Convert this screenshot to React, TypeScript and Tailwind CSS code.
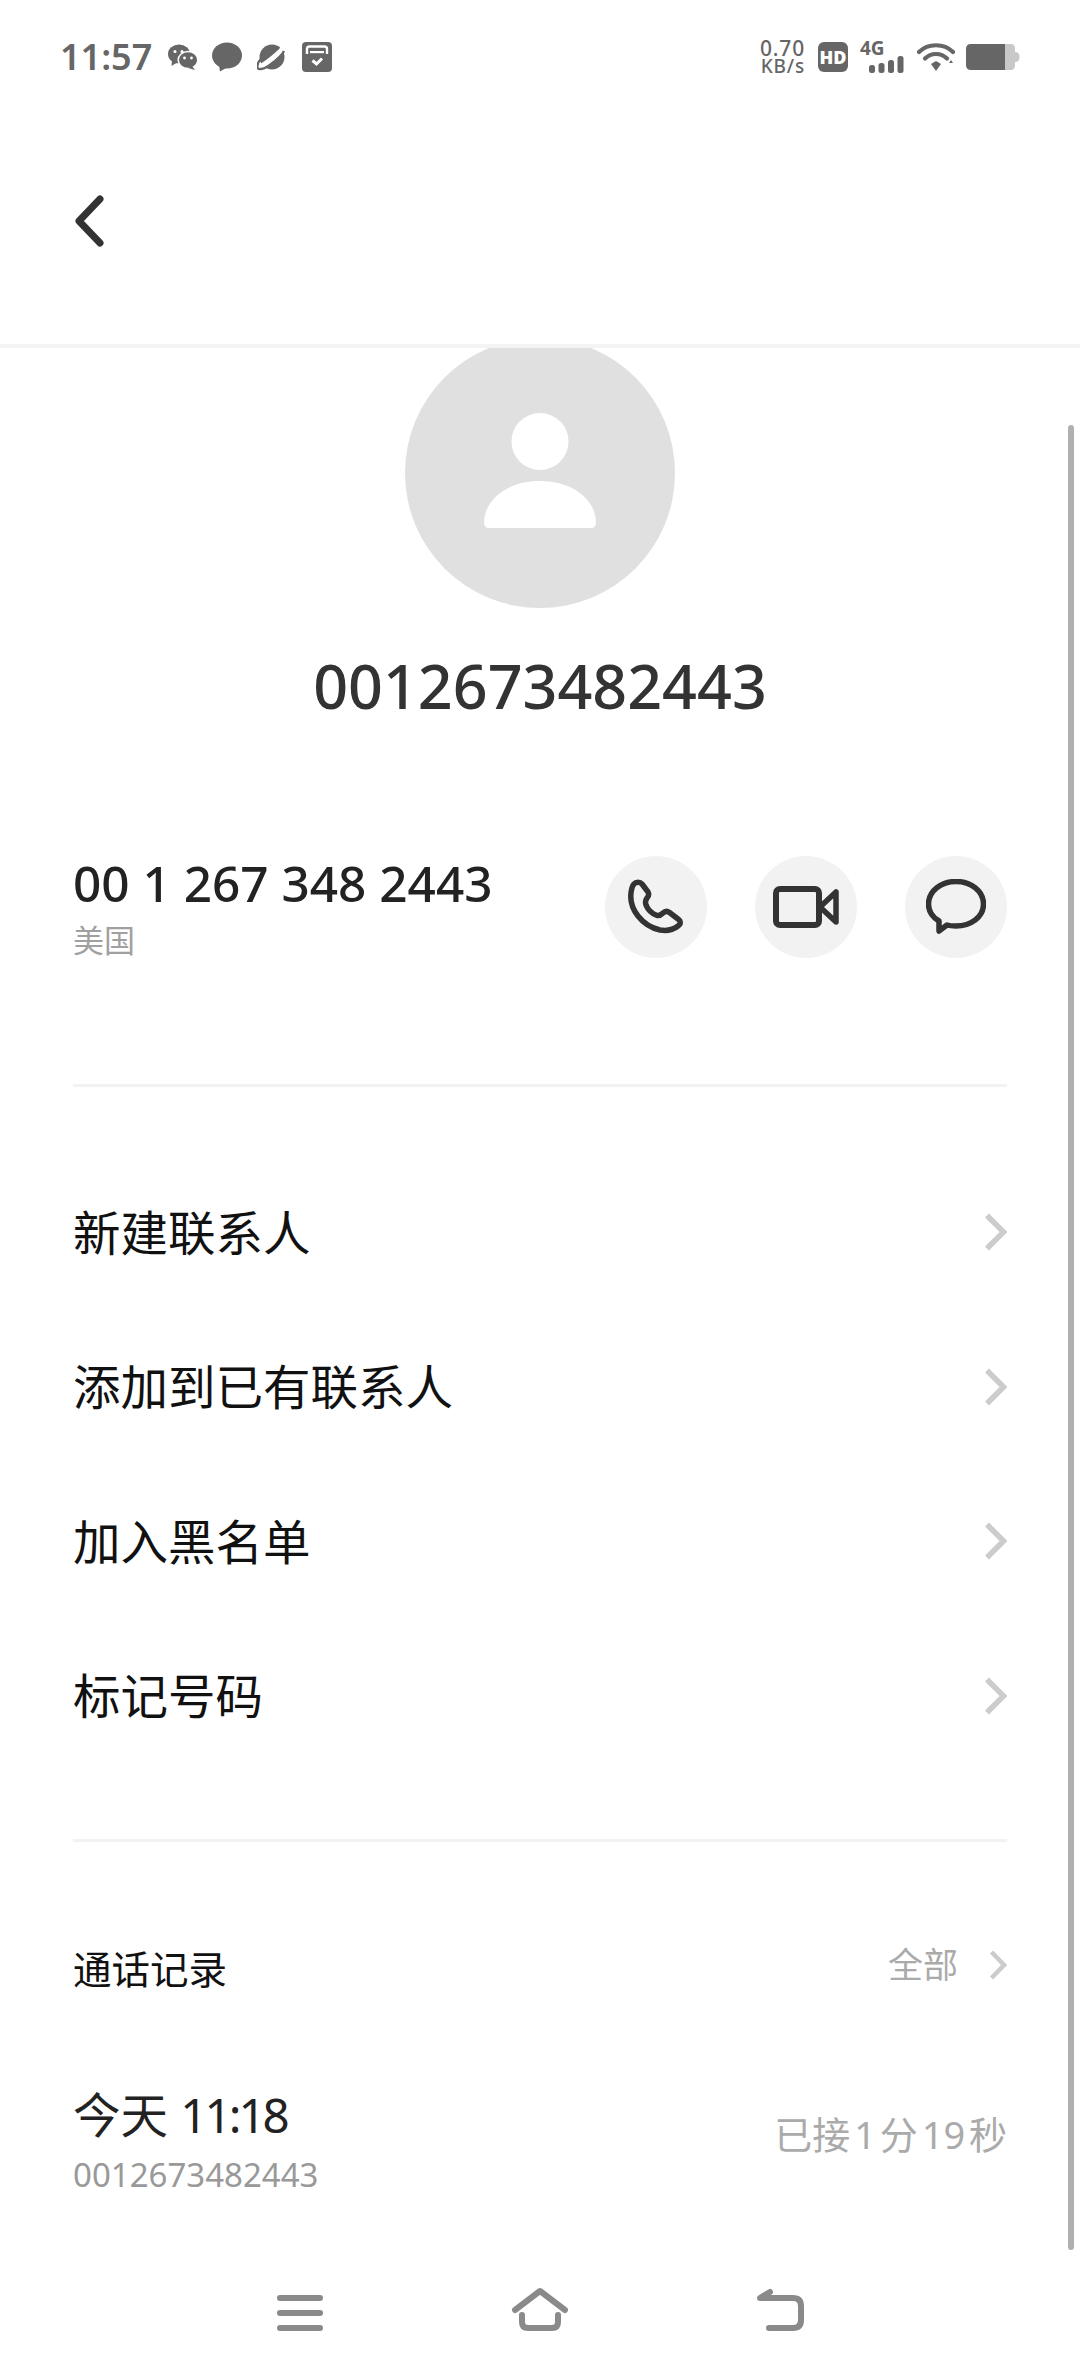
import React from "react";

const font = { fontFamily: '"Noto Sans", "Noto Sans CJK SC", sans-serif' };

function Chevron() {
  return (
    <svg width="23" height="38" viewBox="0 0 23 38" fill="none">
      <path d="M3 2.5 L19.5 19 L3 35.5" stroke="#cccccc" strokeWidth="5.5" strokeLinejoin="miter" />
    </svg>
  );
}

function SmallChevron() {
  return (
    <svg width="18" height="30" viewBox="0 0 18 30" fill="none">
      <path d="M2.5 2 L15 15 L2.5 28" stroke="#cccccc" strokeWidth="4.5" strokeLinejoin="miter" />
    </svg>
  );
}

function StatusLeft() {
  return (
    <div className="flex items-center">
      <span className="w-[168px] pl-[60px] text-[36px] leading-none font-semibold text-[#666]">11:57</span>
      <svg width="30" height="26" viewBox="0 0 30 26">
        <ellipse cx="11" cy="10" rx="11" ry="9.5" fill="#666" />
        <path d="M4 16 L3.5 22 L10 18Z" fill="#666" />
        <ellipse cx="20" cy="16" rx="9.8" ry="8.5" fill="#666" stroke="#fff" strokeWidth="1.5" />
        <path d="M24 22 L27 26 L20 24Z" fill="#666" />
        <circle cx="7" cy="7.5" r="1.5" fill="#fff" />
        <circle cx="14" cy="7.5" r="1.5" fill="#fff" />
        <circle cx="16.5" cy="14" r="1.4" fill="#fff" />
        <circle cx="23.5" cy="14" r="1.4" fill="#fff" />
      </svg>
      <svg width="30" height="30" viewBox="0 0 30 30" className="ml-[14px]">
        <ellipse cx="15" cy="13.5" rx="15" ry="13" fill="#666" />
        <path d="M7 23 L8 29.5 L16 25Z" fill="#666" />
      </svg>
      <svg width="30" height="28" viewBox="0 0 30 28" className="ml-[15px]">
        <circle cx="15" cy="14" r="12.5" fill="#666" />
        <path d="M1 24 C6 24 24 9 28 3" fill="none" stroke="#fff" strokeWidth="5" />
        <path d="M4 16 C-1 21 -1 27 4 26 C12 25 24 14 27 8" fill="none" stroke="#666" strokeWidth="2.4" />
      </svg>
      <svg width="30" height="30" viewBox="0 0 30 30" className="ml-[15px]">
        <rect width="30" height="30" rx="4" fill="#666" />
        <path d="M5 12 V7 Q5 4.5 7.5 4.5 H22.5 Q25 4.5 25 7 V12" fill="none" stroke="#fff" strokeWidth="2.4" />
        <rect x="8" y="9" width="14" height="2.2" fill="#fff" />
        <path d="M10.5 18.5 L14.5 22 L20 16.5" fill="none" stroke="#fff" strokeWidth="3" />
      </svg>
    </div>
  );
}

function StatusRight() {
  return (
    <div className="flex items-center">
      <div className="flex w-[47px] flex-col items-end gap-[1px] whitespace-nowrap text-[#666] font-medium">
        <span className="h-[17px] text-[21px] leading-[17px] tracking-[0.8px]">0.70</span>
        <span className="h-[17px] text-[19px] leading-[17px] tracking-[0.8px]">KB/s</span>
      </div>
      <div className="ml-[13px] flex h-[30px] w-[30px] items-center justify-center rounded-[6px] bg-[#666] text-[18px] leading-none font-black text-white">
        HD
      </div>
      <div className="relative ml-[12px] h-[30px] w-[44px]">
        <span className="absolute left-0 top-[-4px] text-[19px] leading-[20px] font-bold text-[#666]">4G</span>
        <svg width="35" height="17" viewBox="0 0 35 17" className="absolute bottom-[-1px] right-0">
          <rect x="0" y="9" width="6" height="8" rx="2.5" fill="#666" />
          <rect x="9.5" y="7" width="6" height="10" rx="2.5" fill="#666" />
          <rect x="19" y="4" width="6" height="13" rx="2.5" fill="#666" />
          <rect x="28.5" y="0" width="6" height="17" rx="2.5" fill="#666" />
        </svg>
      </div>
      <svg width="38" height="30" viewBox="0 0 38 30" className="ml-[13px]">
        <path d="M2 10 C11 1 27 1 36 10" fill="none" stroke="#666" strokeWidth="4.2" strokeLinecap="round" />
        <path d="M8 16.5 C14 10.5 24 10.5 30 16.5" fill="none" stroke="#666" strokeWidth="4.2" strokeLinecap="round" />
        <path d="M14 22 L19 19 L24 22 L19 29Z" fill="#666" />
        <path d="M32 21 L36 21 L34 18Z" fill="#666" />
      </svg>
      <svg width="54" height="26" viewBox="0 0 54 26" className="ml-[11px]">
        <path d="M39 0 H45 Q49 0 49 5 V8 Q53.5 8 53.5 13 Q53.5 18 49 18 V21 Q49 26 45 26 H39Z" fill="#c8c8c8" />
        <path d="M39 0 H5 Q0 0 0 5 V21 Q0 26 5 26 H39Z" fill="#666" />
      </svg>
    </div>
  );
}

function ActionCircle({ children }: { children: React.ReactNode }) {
  return (
    <div className="flex h-[102px] w-[102px] items-center justify-center rounded-full bg-[#f2f2f2]">{children}</div>
  );
}

function MenuRow({ label }: { label: string }) {
  return (
    <div className="flex h-[154.5px] items-center justify-between">
      <span className="text-[47.5px] leading-none text-[#111]">{label}</span>
      <Chevron />
    </div>
  );
}

export default function App() {
  return (
    <div className="relative flex h-[2376px] w-[1080px] flex-col overflow-hidden bg-white" style={font}>
      {/* Top bar */}
      <div className="relative z-10 h-[348px] shrink-0 border-b-4 border-[#f4f4f4] bg-white">
        <div className="flex h-[116px] items-center justify-between pr-[60px] pb-[2px]">
          <StatusLeft />
          <StatusRight />
        </div>
        <div className="flex h-[210px] items-center pl-[73px]">
          <svg width="34" height="52" viewBox="0 0 34 52" fill="none">
            <path d="M27 4 L6 26 L27 48" stroke="#333" strokeWidth="7" strokeLinecap="round" strokeLinejoin="round" />
          </svg>
        </div>
      </div>

      {/* Scroll content */}
      <div className="-mt-[10px] flex-1 overflow-hidden">
        <div className="flex flex-col items-center">
          <div className="flex h-[270px] w-[270px] items-center justify-center rounded-full bg-[#e0e0e0]">
            <svg width="112" height="116" viewBox="0 0 112 116" className="mb-[4px]">
              <circle cx="56" cy="28.5" r="28.5" fill="#fff" />
              <path d="M0 108 C2 84 26 68 56 68 C86 68 110 84 112 108 Q112 115 108 115 H4 Q0 115 0 108Z" fill="#fff" />
            </svg>
          </div>
          <div className="mt-[42px] text-[61px] leading-[72px] font-medium text-[#333]">0012673482443</div>
        </div>

        <div className="mt-[134px] flex items-center justify-between px-[73px]">
          <div className="flex flex-col">
            <span className="text-[49.5px] leading-[54px] font-medium text-[#222]">00 1 267 348 2443</span>
            <span className="mt-[12px] text-[31px] leading-[36px] text-[#a0a0a0]">美国</span>
          </div>
          <div className="flex gap-[48px]">
            <ActionCircle>
              <svg width="56" height="56" viewBox="0 0 56 56" fill="none">
                <path
                  d="M6 5 C8 2.5 12 2.5 14 5 L20 13 C21 15 21 17 19 19 C17.5 21 17 23 18 26 C20 31 25 35 29 36.5 C32 37 33 36 35 34 C37 32 39.5 32 41.5 33.5 L50 40 C53 42 53 45 50 47 C45 51 38 52 32 51 C14 47 1 30 3 14 C3.5 10 4 7 6 5Z"
                  stroke="#333"
                  strokeWidth="5.5"
                  strokeLinejoin="round"
                />
              </svg>
            </ActionCircle>
            <ActionCircle>
              <svg width="66" height="42" viewBox="0 0 66 42" fill="none">
                <rect x="3" y="3" width="43" height="36" rx="4" stroke="#333" strokeWidth="6" />
                <path d="M47 21 L63 6 V36Z" stroke="#333" strokeWidth="5.5" strokeLinejoin="round" />
              </svg>
            </ActionCircle>
            <ActionCircle>
              <svg width="60" height="56" viewBox="0 0 60 56" fill="none">
                <path
                  d="M30 2.5 C45 2.5 57.5 12 57.5 25 C57.5 38 45 47 30 47 C27 47 24 47 21 46 L13 52 L13 42 C6 38 2.5 32 2.5 25 C2.5 12 15 2.5 30 2.5Z"
                  stroke="#333"
                  strokeWidth="5.5"
                  strokeLinejoin="round"
                />
              </svg>
            </ActionCircle>
          </div>
        </div>

        <div className="mx-[73px] mt-[126px] border-t-[3px] border-[#f2f2f2]" />

        <div className="mt-[68px] flex flex-col px-[73px]">
          {["新建联系人", "添加到已有联系人", "加入黑名单", "标记号码"].map((t) => (
            <MenuRow key={t} label={t} />
          ))}
        </div>

        <div className="mx-[73px] mt-[66px] border-t-[3px] border-[#f2f2f2]" />

        <div className="mt-[98px] flex items-center justify-between px-[73px]">
          <span className="text-[38.5px] leading-[50px] text-[#111]">通话记录</span>
          <div className="flex items-center gap-[31px]">
            <span className="mb-[8px] text-[35px] leading-[50px] text-[#aaa]">全部</span>
            <div className="mb-[8px] flex">
              <SmallChevron />
            </div>
          </div>
        </div>

        <div className="mt-[90px] flex items-center justify-between px-[73px]">
          <div className="flex flex-col">
            <span className="text-[47.5px] leading-[54px] text-[#222]">
              今天 <span className="tracking-[-3px]">11:18</span>
            </span>
            <span className="mt-[13px] text-[33px] leading-[40px] text-[#999]">0012673482443</span>
          </div>
          <span className="mb-[16px] text-[38px] leading-[50px] text-[#aaa] [word-spacing:-6px]">已接 1 分 19 秒</span>
        </div>
      </div>

      {/* Navigation bar */}
      <div className="flex h-[116px] shrink-0 items-center justify-center bg-white">
        <svg width="600" height="116" viewBox="0 0 600 116" fill="none" stroke="#8a8a8a" strokeWidth="6" strokeLinecap="round" strokeLinejoin="round">
          <path d="M40 38 H80 M40 53 H80 M40 68 H80" />
          <path d="M275 50 L300 31 L325 50" />
          <path d="M282 55 V62 Q282 68 288 68 H312 Q318 68 318 62 V55" />
          <path d="M529 68 H553 Q561 68 561 60 V46 Q561 38 553 38 H520 L530 32" />
        </svg>
      </div>

      {/* Scrollbar overlay */}
      <div className="absolute left-[1068px] top-[425px] h-[1825px] w-[6px] rounded-full bg-[#b0b0b0]" />
    </div>
  );
}
